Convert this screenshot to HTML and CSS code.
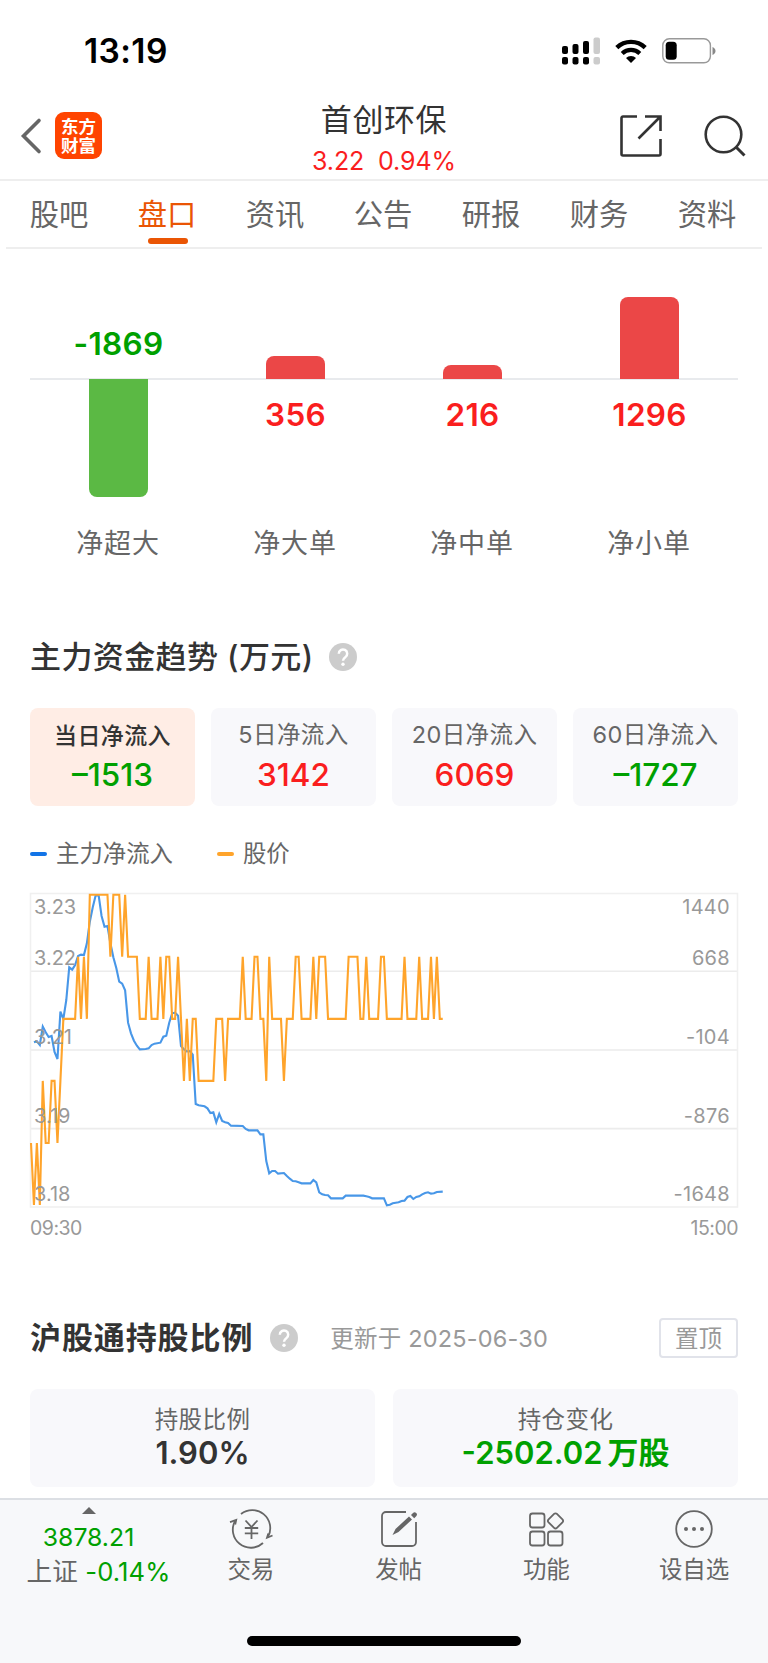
FILE: index.html
```html
<!DOCTYPE html>
<html lang="zh-CN">
<head>
    <meta charset="UTF-8">
    <title>首创环保 - 盘口</title>
    <link rel="stylesheet" href="styles.css">
</head>
<body>
    <div class="status-bar">
        <span class="time">13:19</span>
        <div class="status-icons">
            <svg class="signal" width="39" height="28" viewBox="0 0 39 28">
                <rect x="0" y="9" width="6" height="8" rx="2"/>
                <rect x="10.5" y="7" width="6" height="10" rx="2"/>
                <rect x="21" y="4" width="6" height="13" rx="2"/>
                <rect x="31.5" y="0.5" width="6.5" height="16.5" rx="2" fill="#ccc"/>
                <rect x="0" y="20" width="6" height="7.5" rx="2"/>
                <rect x="10.5" y="20" width="6" height="7.5" rx="2"/>
                <rect x="21" y="20" width="6" height="7.5" rx="2"/>
                <rect x="31.5" y="20" width="6.5" height="7.5" rx="2" fill="#ccc"/>
            </svg>
            <svg class="wifi" width="32" height="24" viewBox="0 0 32 24">
                <path d="M1.8 8.6a20.4 20.4 0 0 1 28.4 0" fill="none" stroke="#000" stroke-width="4.4"/>
                <path d="M7.2 14.4a12.8 12.8 0 0 1 17.6 0" fill="none" stroke="#000" stroke-width="4.2"/>
                <path d="M16 24l-5-5a7 7 0 0 1 10 0z"/>
            </svg>
            <svg class="battery" width="54" height="26" viewBox="0 0 54 26">
                <rect x="0.8" y="0.8" width="47.6" height="24" rx="6.5" fill="none" stroke="#999" stroke-width="1.4"/>
                <rect x="3.7" y="3.8" width="11" height="18" rx="3.5"/>
                <path d="M50.5 9c4 1.5 4 6.5 0 8z" fill="#888"/>
            </svg>
        </div>
    </div>

    <header class="header">
        <div class="header-left">
            <svg width="20" height="34" viewBox="0 0 20 34"><path d="M18 1.5L2.5 17L18 32.5" fill="none" stroke="#666" stroke-width="3.6" stroke-linecap="round"/></svg>
            <div class="logo"><span>东方</span><span>财富</span></div>
        </div>
        <div class="header-title">
            <h1>首创环保</h1>
            <p>3.22&nbsp; 0.94%</p>
        </div>
        <div class="header-right">
            <svg width="42" height="42" viewBox="0 0 42 42" fill="none" stroke="#333" stroke-width="2.6">
                <path d="M17 1.5H3a1.5 1.5 0 0 0-1.5 1.5v36a1.5 1.5 0 0 0 1.5 1.5h36a1.5 1.5 0 0 0 1.5-1.5V24"/>
                <path d="M25 1.5h15.5V16M40 2L18.5 23.5"/>
            </svg>
            <svg width="42" height="42" viewBox="0 0 42 42" fill="none" stroke="#333" stroke-width="2.6">
                <circle cx="19.5" cy="19.5" r="17.8"/>
                <path d="M32 32l8.500 8.500" stroke-width="3"/>
            </svg>
        </div>
    </header>

    <nav class="tabs">
        <a>股吧</a>
        <a class="active">盘口</a>
        <a>资讯</a>
        <a>公告</a>
        <a>研报</a>
        <a>财务</a>
        <a>资料</a>
    </nav>

    <main>
        <!-- 单量净额柱状图 -->
        <section class="bars">
            <div class="bar-col">
                <div class="bar-top"><b class="green">-1869</b></div>
                <div class="bar-bottom"><i class="bar down" style="height:118px"></i></div>
                <span>净超大</span>
            </div>
            <div class="bar-col">
                <div class="bar-top"><i class="bar up" style="height:23px"></i></div>
                <div class="bar-bottom"><b class="red">356</b></div>
                <span>净大单</span>
            </div>
            <div class="bar-col">
                <div class="bar-top"><i class="bar up" style="height:14px"></i></div>
                <div class="bar-bottom"><b class="red">216</b></div>
                <span>净中单</span>
            </div>
            <div class="bar-col">
                <div class="bar-top"><i class="bar up" style="height:82px"></i></div>
                <div class="bar-bottom"><b class="red">1296</b></div>
                <span>净小单</span>
            </div>
        </section>

        <section class="trend">
            <div class="section-head">
                <h2>主力资金趋势 (万元)</h2>
                <svg class="help" width="28" height="28" viewBox="0 0 28 28"><circle cx="14" cy="14" r="14" fill="#ccc"/><path d="M9.8 10.8a4.2 4.2 0 1 1 6.5 3.4c-1.6 1.1-2.3 1.7-2.3 3.5" fill="none" stroke="#fff" stroke-width="2.5"/><circle cx="14" cy="21.3" r="1.7" fill="#fff"/></svg>
            </div>
            <div class="cards four">
                <div class="card selected"><span>当日净流入</span><strong class="green">–1513</strong></div>
                <div class="card"><span>5日净流入</span><strong class="red">3142</strong></div>
                <div class="card"><span>20日净流入</span><strong class="red">6069</strong></div>
                <div class="card"><span>60日净流入</span><strong class="green">–1727</strong></div>
            </div>
            <div class="legend">
                <span class="blue">主力净流入</span>
                <span class="orange">股价</span>
            </div>
            <div class="chart">
                <svg width="708" height="315" viewBox="0 0 708 315" fill="none">
                    <g stroke="#ececec" stroke-width="1.6">
                        <path d="M0 78.3h708M0 157h708M0 235.6h708"/>
                        <rect x="0.5" y="0.5" width="707" height="313.5" stroke="#f0f0f0"/>
                    </g>
                    <!-- x 为开盘后的分钟数 -->
                    <polyline class="line-flow" transform="translate(1 -13) scale(2.941 0.33333)" points="1,487 2,484 3,495 4,440 5,457 6,471 7,468 8,516 9,537 10,395 11,417 12,360 13,262 14,269 15,255 16,228 17,224 18,225 19,190 20,125 21,82 22,46 23,46 24,108 25,140 26,138 27,190 28,232 29,264 30,305 31,311 32,331 33,428 34,460 35,482 36,497 37,508 39,507 40,505 41,495 42,491 44,488 45,470 46,467 47,428 48,400 49,398 50,407 51,498 52,508 53,514 54,513 55,524 56,672 57,676 59,679 60,685 61,699 62,697 63,727 64,702 65,723 66,727 67,729 68,737 72,738 73,747 74,751 77,751 78,763 79,763 80,843 81,880 82,873 83,873 84,881 86,879 87,888 88,896 89,903 90,904 91,907 92,910 95,910 96,900 97,907 98,937 99,943 100,945 101,946 102,955 106,955 107,947 113,947 114,949 115,951 116,955 120,955 121,976 122,974 123,970 124,968 125,967 126,963 127,962 128,951 129,948 130,957 131,951 132,949 133,943 134,939 135,937 136,941 137,940 138,936 140,935"/>
                    <polyline class="line-price" transform="translate(1 1.7) scale(2.941 62.07)" points="0,4 1,5 2,4 3,5 4,3 5,4 6,4 7,3 8,3 9,4 10,3 11,2 15,2 16,1 17,2 18,1 19,2 20,0 26,0 27,1 28,0 30,0 31,1 32,0 33,1 36,1 37,2 39,2 40,1 41,2 43,2 44,1 45,2 46,1 47,1 48,2 49,2 50,1 51,2 52,3 53,2 54,3 55,2 56,2 57,3 62,3 63,2 65,2 66,3 67,2 71,2 72,1 73,2 75,2 76,1 77,1 78,2 79,2 80,3 81,1 82,2 85,2 86,3 87,2 89,2 90,1 91,1 92,2 95,2 96,1 97,2 98,1 100,1 101,2 107,2 108,1 111,1 112,2 113,2 114,1 115,2 118,2 119,1 120,1 121,2 126,2 127,1 128,2 131,2 132,1 133,2 135,2 136,1 137,2 138,1 139,2 140,2"/>
                </svg>
                <div class="scale">
                    <p><span>3.23</span><span>1440</span></p>
                    <p><span>3.22</span><span>668</span></p>
                    <p><span>3.21</span><span>-104</span></p>
                    <p><span>3.19</span><span>-876</span></p>
                    <p><span>3.18</span><span>-1648</span></p>
                </div>
            </div>
            <div class="times"><span>09:30</span><span>15:00</span></div>
        </section>

        <section class="holding">
            <div class="section-head">
                <h2 class="strong">沪股通持股比例</h2>
                <svg class="help" width="28" height="28" viewBox="0 0 28 28"><circle cx="14" cy="14" r="14" fill="#ccc"/><path d="M9.8 10.8a4.2 4.2 0 1 1 6.5 3.4c-1.6 1.1-2.3 1.7-2.3 3.5" fill="none" stroke="#fff" stroke-width="2.5"/><circle cx="14" cy="21.3" r="1.7" fill="#fff"/></svg>
                <span class="updated">更新于 2025-06-30</span>
                <button class="pin">置顶</button>
            </div>
            <div class="cards two">
                <div class="card"><span>持股比例</span><strong>1.90%</strong></div>
                <div class="card"><span>持仓变化</span><strong class="green">-2502.02<em>万股</em></strong></div>
            </div>
        </section>
    </main>

    <footer class="footer">
        <div class="toolbar">
            <div class="index">
                <i class="arrow"></i>
                <p class="green">3878.21</p>
                <p>上证 <span class="green">-0.14%</span></p>
            </div>
            <a class="tool">
                <svg width="44" height="38" viewBox="0 0 44 38" fill="none" stroke="#666" stroke-width="1.8">
                    <path d="M12 4A18 18 0 0 1 39.3 26.2M34 33A18 18 0 0 1 6.2 10.8"/>
                    <path d="M1 12.2l6.200-2.200-1 4.500M43.500 25.500l-5.500 2.300 1.300-4.300"/>
                    <path d="M16.500 10.500l6 6.500 6-6.500M22.500 17v12M15.800 18h13.400M15.800 23.300h13.400"/>
                </svg>
                <span>交易</span>
            </a>
            <a class="tool">
                <svg width="38" height="38" viewBox="0 0 38 38" fill="none" stroke="#666" stroke-width="1.8">
                    <path d="M26 2H6a4 4 0 0 0-4 4v26a4 4 0 0 0 4 4h26a4 4 0 0 0 4-4V12"/>
                    <path d="M12.5 25l3-6L29 6.5l3 3L18.500 22zM31 5l2-2a2.200 2.200 0 0 1 3.200 3.200l-2 2z" fill="#666" stroke="none"/>
                </svg>
                <span>发帖</span>
            </a>
            <a class="tool">
                <svg width="38" height="38" viewBox="0 0 38 38" fill="none" stroke="#666" stroke-width="1.8">
                    <rect x="3" y="3.5" width="14.5" height="14" rx="2.5"/>
                    <rect x="3" y="21.5" width="14.5" height="14" rx="2.5"/>
                    <rect x="21" y="21.5" width="14.5" height="14" rx="2.5"/>
                    <rect x="22.6" y="5" width="11.8" height="11.8" rx="2" transform="rotate(45 28.5 10.9)"/>
                </svg>
                <span>功能</span>
            </a>
            <a class="tool">
                <svg width="38" height="38" viewBox="0 0 38 38" fill="none" stroke="#666" stroke-width="1.8">
                    <circle cx="19" cy="19" r="17.8"/>
                    <g fill="#666" stroke="none"><circle cx="11" cy="19" r="2"/><circle cx="19" cy="19" r="2"/><circle cx="27" cy="19" r="2"/></g>
                </svg>
                <span>设自选</span>
            </a>
        </div>
        <div class="home-bar"></div>
    </footer>
</body>
</html>
```

FILE: styles.css
```css
* {
    box-sizing: border-box;
    margin: 0;
    padding: 0;
}
body {
    width: 768px;
    height: 1663px;
    display: flex;
    flex-direction: column;
    overflow: hidden;
    background-color: #fff;
    color: #666;
    font-family: Inter, "Noto Sans CJK SC", sans-serif;
}
svg {
    display: block;
    flex: none;
    overflow: visible;
}
i, em {
    font-style: normal;
}
.green {
    color: #00a000;
}
.red {
    color: #fa1e1e;
}

/* 状态栏 */
.status-bar {
    height: 92px;
    padding: 31px 52px 0 84px;
    display: flex;
    justify-content: space-between;
}
.time {
    color: #000;
    font-size: 33.5px;
    line-height: 41px;
    font-weight: 600;
    letter-spacing: 0.4px;
}
.status-icons {
    display: flex;
    padding-top: 6px;
}
.wifi {
    margin: 2px 15px 0 14px;
}
.battery {
    margin-top: 1px;
}

/* 顶部标题 */
.header {
    height: 89px;
    padding: 0 22px 0 21px;
    display: grid;
    grid-template-columns: 1fr auto 1fr;
    border-bottom: 2px solid #eee;
}
.header-left {
    display: flex;
    align-items: center;
    gap: 14px;
    padding-bottom: 1px;
}
.header-left svg {
    margin-top: 1px;
}
.logo {
    width: 47px;
    height: 47px;
    margin-top: 1px;
    border-radius: 9px;
    background-color: #ff4400;
    color: #fff;
    font-size: 17.5px;
    line-height: 19px;
    font-weight: 700;
    display: flex;
    flex-direction: column;
    align-items: center;
    justify-content: center;
}
.header-title {
    text-align: center;
    padding: 8px 0 0 1px;
}
.header-title h1 {
    color: #333;
    font-size: 31px;
    line-height: 40px;
    font-weight: 400;
    letter-spacing: 0.6px;
}
.header-title p {
    color: #fa1e1e;
    font-size: 25px;
    line-height: 30px;
    padding-top: 6px;
    letter-spacing: -0.1px;
}
.header-right {
    display: flex;
    justify-content: flex-end;
    gap: 42px;
    padding: 23px 0 0;
}

/* 标签栏 */
.tabs {
    height: 68px;
    margin: 0 6px;
    display: flex;
    border-bottom: 2px solid #eee;
}
.tabs a {
    flex: 1;
    display: flex;
    flex-direction: column;
    align-items: center;
    font-size: 29.3px;
    line-height: 40px;
    padding: 14px 2px 0 0;
}
.tabs .active {
    color: #ea5504;
}
.tabs .active::after {
    content: "";
    width: 40px;
    height: 6px;
    margin: 3px 0 0 2px;
    border-radius: 3px;
    background-color: #ea5504;
}

main {
    padding: 0 30px;
    flex: 1;
}

/* 柱状图 */
.bars {
    display: grid;
    grid-template-columns: repeat(4, 1fr);
    height: 362px;
}
.bar-col {
    display: flex;
    flex-direction: column;
    align-items: center;
    font-size: 27px;
    line-height: 36px;
    letter-spacing: 0.9px;
}
.bar-col > span {
    padding-right: 1px;
}
.bar-col b {
    font-size: 31.5px;
    font-weight: 600;
    letter-spacing: 0.3px;
}
.bar-top {
    width: 100%;
    height: 131px;
    display: flex;
    align-items: flex-end;
    justify-content: center;
    background: linear-gradient(#e8eaed, #e8eaed) bottom / 100% 2px no-repeat;
}
.bar-top b {
    margin-bottom: 18px;
}
.bar-bottom {
    height: 146px;
    display: flex;
    align-items: flex-start;
}
.bar-bottom b {
    margin-top: 17px;
}
.bar {
    width: 59px;
}
.bar.up {
    margin-bottom: 1px;
    background-color: #eb4747;
    border-radius: 8px 8px 0 0;
}
.bar.down {
    margin-top: -1px;
    background-color: #5bb944;
    border-radius: 0 0 8px 8px;
}

/* 区块标题 */
.section-head {
    display: flex;
    align-items: center;
    height: 40px;
}
.section-head h2 {
    color: #333;
    font-size: 31px;
    font-weight: 500;
    line-height: 40px;
    letter-spacing: 0.4px;
}
.section-head .strong {
    font-weight: 600;
    letter-spacing: 0.9px;
}
.help {
    margin-left: 15px;
}
.strong + .help {
    margin-left: 17px;
}
.trend {
    padding-top: 26px;
}

.cards {
    display: grid;
    margin-top: 31px;
}
.four {
    grid-template-columns: repeat(4, 1fr);
    gap: 16px;
}
.two {
    grid-template-columns: 1fr 1fr;
    gap: 18px;
}
.card {
    height: 98px;
    padding-top: 11px;
    border-radius: 8px;
    background-color: #f8f8fb;
    display: flex;
    flex-direction: column;
    align-items: center;
    font-size: 23.5px;
    line-height: 32px;
    letter-spacing: 0.4px;
}
.card strong {
    font-size: 31.5px;
    line-height: 40px;
    font-weight: 500;
    letter-spacing: 0;
    margin-top: 4px;
}
.selected {
    background-color: #ffede5;
}
.selected span {
    color: #333;
    font-size: 23px;
    font-weight: 500;
    padding-top: 1px;
    margin-bottom: -1px;
}

.legend {
    display: flex;
    gap: 44px;
    margin-top: 31px;
    font-size: 23.4px;
    line-height: 34px;
}
.legend span {
    display: flex;
    align-items: center;
    gap: 9px;
}
.legend span::before {
    content: "";
    width: 17px;
    height: 4px;
    border-radius: 2px;
}
.blue::before {
    background-color: #1274e7;
}
.orange::before {
    background-color: #ffa42b;
}

/* 走势图 */
.chart {
    position: relative;
    height: 315px;
    margin-top: 22px;
}
.chart polyline {
    vector-effect: non-scaling-stroke;
    stroke-width: 2.1;
}
.line-flow {
    stroke: #4897e8;
}
.line-price {
    stroke: #ffa42b;
}
.scale {
    position: absolute;
    inset: 0;
    padding: 0 8px 0 4px;
    color: #999;
    font-size: 20px;
    line-height: 27px;
    display: grid;
    grid-template-rows: 28px 51px 79px 79px 78px;
    align-items: end;
}
.scale p {
    display: flex;
    justify-content: space-between;
}
.scale span + span {
    letter-spacing: 0.3px;
}
.times {
    display: flex;
    justify-content: space-between;
    color: #999;
    font-size: 19.5px;
    line-height: 26px;
    letter-spacing: -0.5px;
    padding-top: 7px;
}

.holding {
    padding-top: 77px;
}
.updated {
    margin: -2px 0 0 32px;
    color: #999;
    font-size: 23.5px;
    letter-spacing: 0.2px;
}
.pin {
    width: 79px;
    height: 40px;
    margin-left: auto;
    padding-bottom: 2px;
    border: 2px solid #e1e3ea;
    border-radius: 4px;
    background-color: #fff;
    color: #999;
    font-family: inherit;
    font-size: 23.5px;
}
.holding .card {
    padding-top: 15px;
}
.holding strong {
    color: #333;
    font-size: 31px;
    font-weight: 600;
    line-height: 36px;
    margin-top: -1px;
}
.holding strong.green {
    color: #00a000;
}
.holding em {
    margin-left: 5px;
}

/* 底部工具栏 */
.footer {
    height: 165px;
    border-top: 2px solid #dcdfe4;
    background-color: #f7f8fa;
}
.toolbar {
    display: grid;
    grid-template-columns: 177px repeat(4, 147.75px);
    height: 136px;
}
.index {
    display: flex;
    flex-direction: column;
    align-items: center;
    padding-top: 7px;
    font-size: 24.8px;
    line-height: 34px;
    white-space: nowrap;
}
.index p + p {
    padding: 1px 0 0 20px;
    font-size: 25.6px;
    letter-spacing: 0.1px;
}
.arrow {
    border: 7px solid transparent;
    border-top: 0;
    border-bottom-color: #666;
    margin-bottom: 6px;
}
.tool {
    display: flex;
    flex-direction: column;
    align-items: center;
    padding-top: 10px;
    font-size: 23.5px;
    line-height: 34px;
}
.tool span {
    margin-top: 5px;
}
.home-bar {
    width: 274px;
    height: 10px;
    margin: 0 auto;
    border-radius: 5px;
    background-color: #000;
}
```
